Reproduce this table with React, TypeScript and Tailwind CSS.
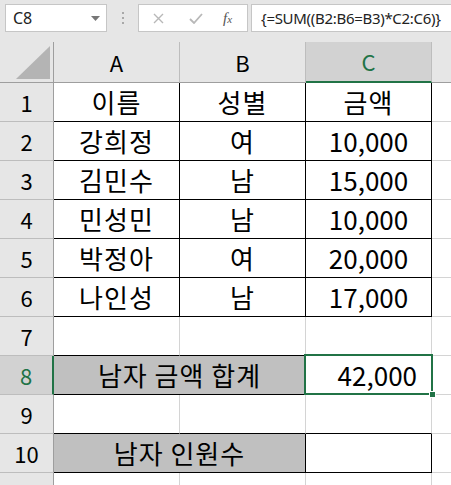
import React from "react";

const KR = { fontFamily: '"Noto Sans CJK KR", "Noto Sans", sans-serif' };

type Cell = {
  text?: string;
  w: number;
  align?: "center" | "right";
  bg?: string;
  r?: string;
  b?: string;
};

const rows: { n: number; cells: Cell[] }[] = [
  { n: 1, cells: [{ text: "이름", w: 126, r: "border-r-black", b: "border-b-black" }, { text: "성별", w: 126, r: "border-r-black", b: "border-b-black" }, { text: "금액", w: 126, r: "border-r-black", b: "border-b-black" }] },
  { n: 2, cells: [{ text: "강희정", w: 126, r: "border-r-black", b: "border-b-black" }, { text: "여", w: 126, r: "border-r-black", b: "border-b-black" }, { text: "10,000", w: 126, r: "border-r-black", b: "border-b-black" }] },
  { n: 3, cells: [{ text: "김민수", w: 126, r: "border-r-black", b: "border-b-black" }, { text: "남", w: 126, r: "border-r-black", b: "border-b-black" }, { text: "15,000", w: 126, r: "border-r-black", b: "border-b-black" }] },
  { n: 4, cells: [{ text: "민성민", w: 126, r: "border-r-black", b: "border-b-black" }, { text: "남", w: 126, r: "border-r-black", b: "border-b-black" }, { text: "10,000", w: 126, r: "border-r-black", b: "border-b-black" }] },
  { n: 5, cells: [{ text: "박정아", w: 126, r: "border-r-black", b: "border-b-black" }, { text: "여", w: 126, r: "border-r-black", b: "border-b-black" }, { text: "20,000", w: 126, r: "border-r-black", b: "border-b-black" }] },
  { n: 6, cells: [{ text: "나인성", w: 126, r: "border-r-black", b: "border-b-black" }, { text: "남", w: 126, r: "border-r-black", b: "border-b-black" }, { text: "17,000", w: 126, r: "border-r-black", b: "border-b-black" }] },
  { n: 7, cells: [{ w: 126, b: "border-b-black" }, { w: 126, b: "border-b-black" }, { w: 126, b: "border-b-black" }] },
  { n: 8, cells: [{ text: "남자 금액 합계", w: 252, bg: "bg-[#c0c0c0]", r: "border-r-black", b: "border-b-black" }, { text: "42,000", w: 126, align: "right", r: "border-r-black", b: "border-b-black" }] },
  { n: 9, cells: [{ w: 126, b: "border-b-black" }, { w: 126, b: "border-b-black" }, { w: 126, b: "border-b-black" }] },
  { n: 10, cells: [{ text: "남자 인원수", w: 252, bg: "bg-[#c0c0c0]", r: "border-r-black", b: "border-b-black" }, { w: 126, r: "border-r-black", b: "border-b-black" }] },
  { n: 11, cells: [{ w: 126 }, { w: 126 }, { w: 126 }] },
];

const isNumber = (t?: string) => !!t && /^[0-9,]+$/.test(t);

function Toolbar() {
  return (
    <div className="h-[42px] bg-[#e6e6e6] flex items-start pt-[4px] pl-[5px]" style={{ fontFamily: '"Noto Sans", "Open Sans", sans-serif' }}>
      <div className="w-[102px] h-[28px] bg-white border border-[#c6c6c6] flex items-center justify-between pl-[7px] pr-[6px]">
        <span className="text-[16px] text-[#222]">C8</span>
        <svg width="9" height="5" viewBox="0 0 9 5"><path d="M0 0h9L4.5 5z" fill="#777" /></svg>
      </div>
      <div className="w-[31px] h-[28px] flex flex-col items-center justify-center gap-[3px]">
        <div className="w-[2px] h-[2px] bg-[#a8a8a8]" />
        <div className="w-[2px] h-[2px] bg-[#a8a8a8]" />
        <div className="w-[2px] h-[2px] bg-[#a8a8a8]" />
      </div>
      <div className="w-[110px] h-[28px] bg-white border border-[#c6c6c6] flex items-center pl-[14px]">
        <svg width="11" height="11" viewBox="0 0 11 11"><path d="M1 1l9 9M10 1l-9 9" stroke="#b8b8b8" strokeWidth="1.4" /></svg>
        <svg width="14" height="11" viewBox="0 0 14 11" className="ml-[25px]"><path d="M1 6l4 4 8-9" stroke="#b8b8b8" strokeWidth="1.8" fill="none" /></svg>
        <span className="ml-[20px] text-[#555] italic text-[15px] leading-none" style={{ fontFamily: '"Liberation Serif", serif' }}>
          f<span className="text-[11px]">x</span>
        </span>
      </div>
      <div className="ml-[3px] flex-1 h-[28px] bg-white border border-r-0 border-[#c6c6c6] flex items-center pl-[9px]">
        <span className="text-[15px] tracking-[-0.3px] text-[#222] whitespace-nowrap">{"{=SUM((B2:B6=B3)*C2:C6)}"}</span>
      </div>
    </div>
  );
}

function HeaderRow() {
  return (
    <div className="flex h-[41px]">
      <div className="w-[54px] shrink-0 h-full bg-[#e6e6e6] border-r border-b border-[#9e9e9e] flex items-end justify-end pr-[3px] pb-[3px]">
        <svg width="34" height="33" viewBox="0 0 34 33"><path d="M34 0v33H0z" fill="#b4b4b4" /></svg>
      </div>
      {["A", "B", "C"].map((c) => (
        <div
          key={c}
          className={`w-[126px] shrink-0 h-full flex items-center justify-center text-[22px] border-r border-r-[#bdbdbd] ${
            c === "C" ? "bg-[#d2d2d2] text-[#217346] border-b-2 border-b-[#217346]" : "bg-[#e6e6e6] text-black border-b border-b-[#9e9e9e]"
          }`}
        >
          {c}
        </div>
      ))}
      <div className="flex-1 h-full bg-[#e6e6e6] border-b border-[#9e9e9e]" />
    </div>
  );
}

export default function App() {
  return (
    <div className="w-[451px] h-[485px] overflow-hidden bg-white relative" style={KR}>
      <Toolbar />
      <HeaderRow />
      {rows.map((row) => (
        <div key={row.n} className="flex h-[39px]">
          <div
            className={`w-[54px] shrink-0 h-full flex items-center justify-center text-[22px] border-b border-b-[#bdbdbd] ${
              row.n === 8 ? "bg-[#d2d2d2] text-[#217346] border-r-2 border-r-[#217346]" : "bg-[#e6e6e6] text-black border-r border-r-[#9e9e9e]"
            }`}
          >
            {row.n}
          </div>
          {row.cells.map((cell, i) => (
            <div
              key={i}
              style={{ width: cell.w }}
              className={`shrink-0 h-full flex items-center text-[26px] text-black border-r border-b border-[#d4d4d4] ${
                cell.align === "right" ? "justify-end pr-[14px]" : "justify-center"
              } ${cell.bg ?? ""} ${cell.r ?? ""} ${cell.b ?? ""}`}
            >
              <span className={`whitespace-pre leading-none ${isNumber(cell.text) ? "" : "tracking-[1px]"}`}>{cell.text}</span>
            </div>
          ))}
          <div className="flex-1 h-full border-b border-[#d4d4d4]" />
        </div>
      ))}
      {/* selection box on C8 */}
      <div className="absolute left-[304px] top-[354px] w-[129px] h-[41px] border-2 border-[#217346] pointer-events-none">
        <div className="absolute right-[-5px] bottom-[-5px] w-[7px] h-[7px] bg-[#217346] border border-white" />
      </div>
    </div>
  );
}
